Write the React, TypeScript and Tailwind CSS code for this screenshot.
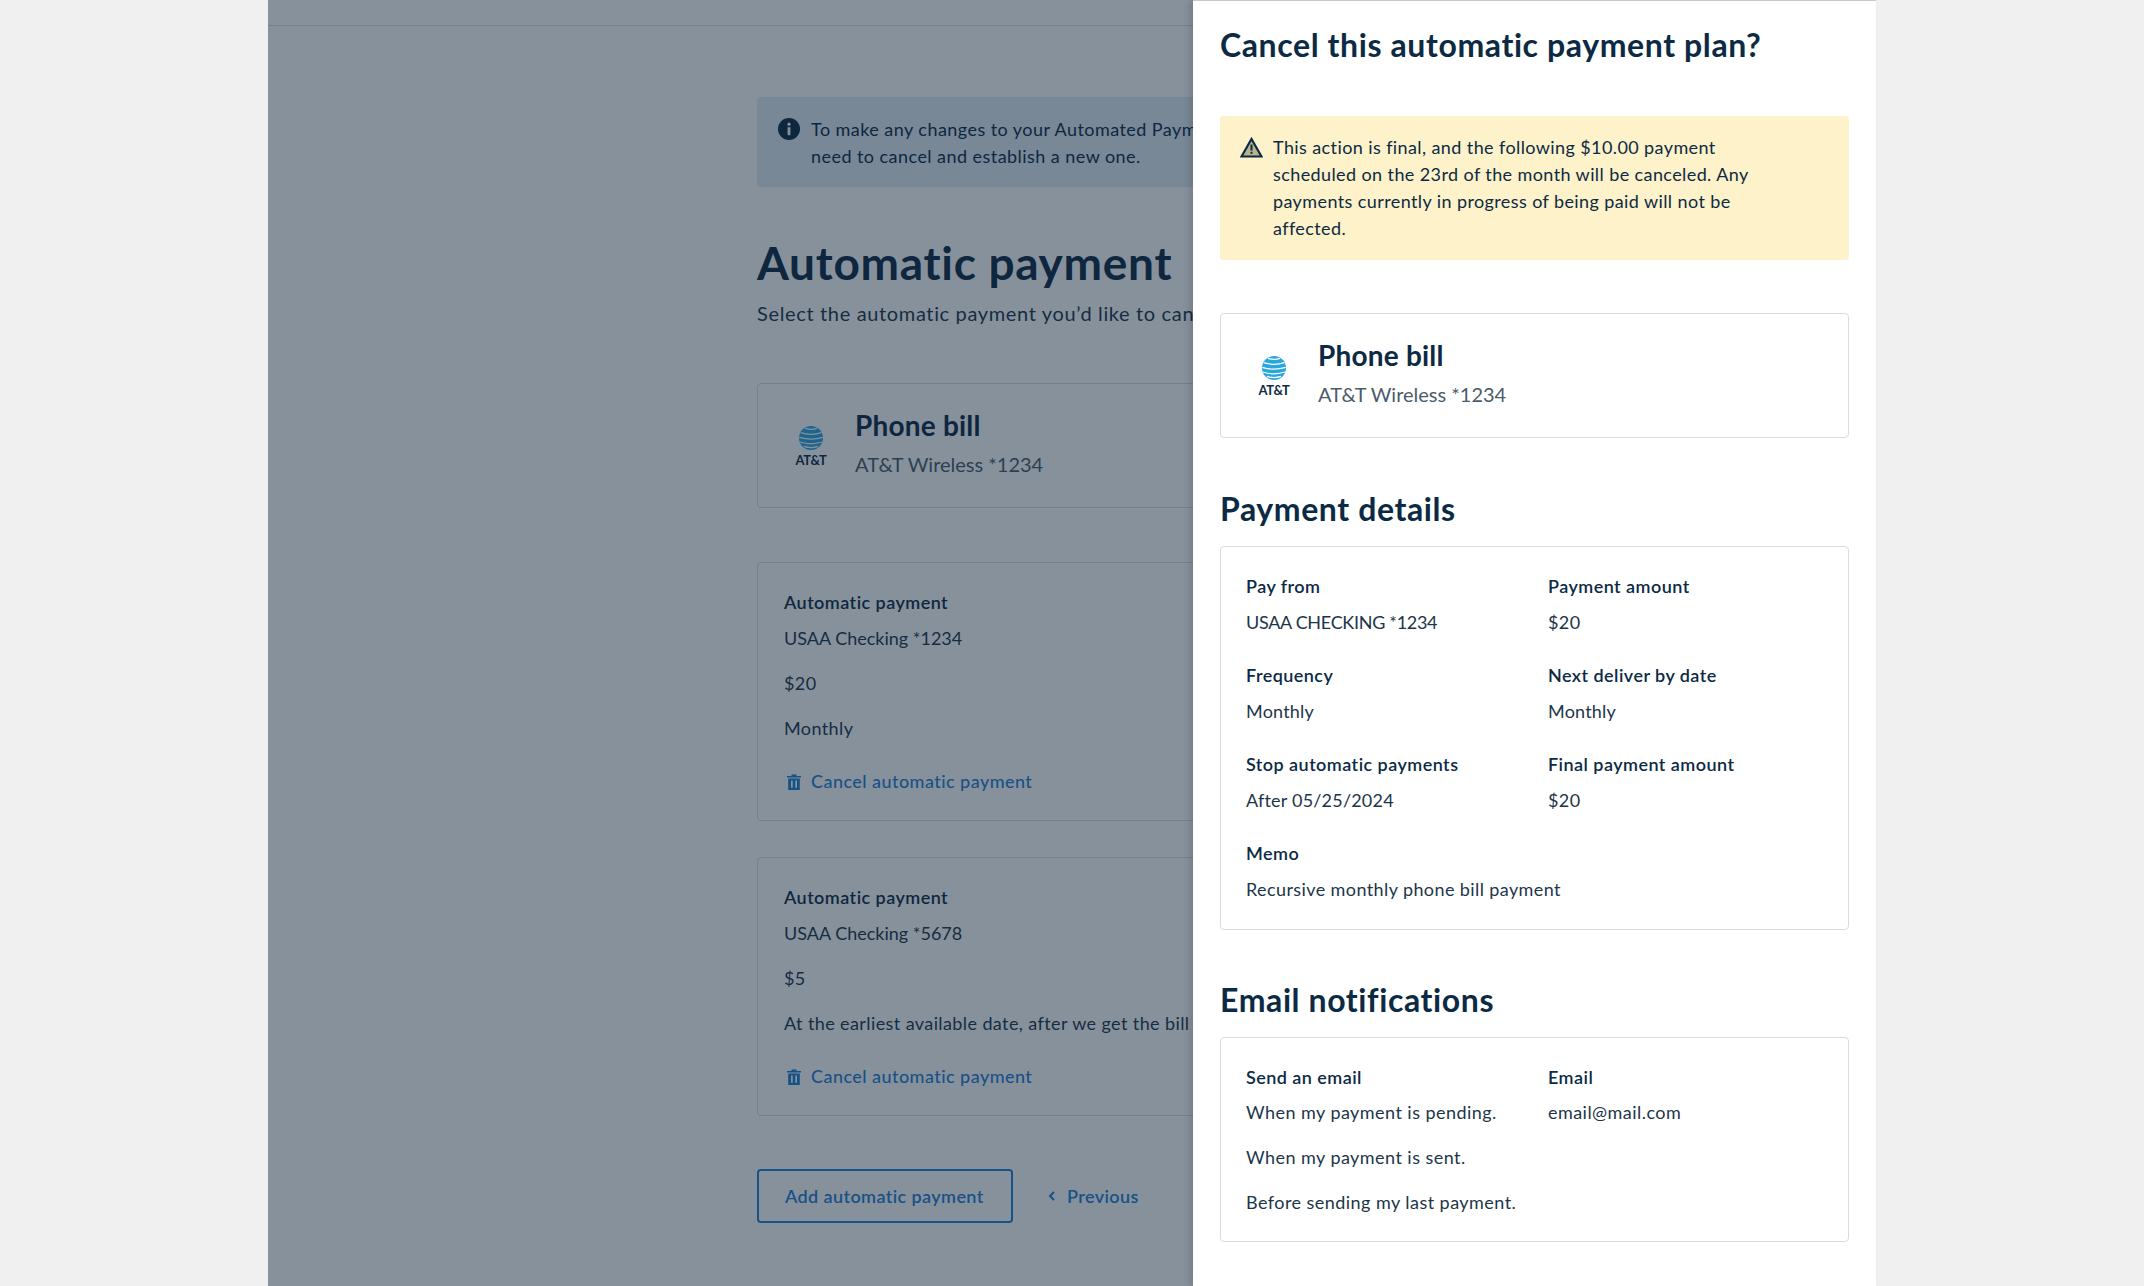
import React from 'react';

const font = { fontFamily: '"Lato", "Noto Sans", sans-serif' };

const AttLogo: React.FC<{ color: string; line: string }> = ({ color, line }) => (
  <div className="flex flex-col items-center w-[34px] pt-[1px]">
    <svg width="24" height="24" viewBox="0 0 24 24">
      <circle cx="12" cy="12" r="12" fill={color} />
      <path d="M6 2.4 Q12 4.4 18 2.4 M1.6 6.6 Q12 10 22.4 6.6 M0.2 11.4 Q12 15 23.8 11.4 M1 16 Q12 19.6 23 16 M5 20.4 Q12 22.8 19 20.4" stroke={line} strokeWidth="1.2" fill="none" />
    </svg>
    <span className="text-[13px] leading-[14px] font-bold mt-[3px] tracking-[-0.3px] text-[#0c2a44]">AT&amp;T</span>
  </div>
);

const TrashIcon = () => (
  <svg width="14" height="16" viewBox="0 0 14 16" fill="currentColor" className="shrink-0">
    <path d="M0 2h4.5V0.5h5V2H14v1.6H0z" />
    <path fillRule="evenodd" d="M1.2 4.4h11.6V16H1.2zM4 6.5v7.2h1.7V6.5zM8.3 6.5v7.2H10V6.5z" />
  </svg>
);

const PhoneCard: React.FC = () => (
  <div className="flex items-center h-[125px] border border-[#d9dcdf] rounded pl-[36px] bg-white">
    <AttLogo color="#2aa6df" line="#fff" />
    <div className="ml-[27px] mb-[8px]">
      <div className="text-[28px] leading-[40px] font-bold text-[#0c2a44] tracking-[0.2px]">Phone bill</div>
      <div className="text-[20px] leading-[30px] mt-[4px] text-[#4b5c6b]">AT&amp;T Wireless *1234</div>
    </div>
  </div>
);

const PlanCard: React.FC<{ account: string; amount: string; when: string }> = ({ account, amount, when }) => (
  <div className="border border-[#d9dcdf] rounded px-[26px] pt-[26px] h-[259px] w-[700px]">
    <div className="text-[18px] leading-[27px] font-semibold text-[#0c2a44] mb-[9px] tracking-[0.45px]">Automatic payment</div>
    <div className="text-[18px] leading-[27px] mb-[18px]">{account}</div>
    <div className="text-[18px] leading-[27px] mb-[18px] tracking-[0.4px]">{amount}</div>
    <div className="text-[18px] leading-[27px] mb-[26px] tracking-[0.4px] whitespace-nowrap">{when}</div>
    <a className="flex items-center gap-[10px] pl-[3px] text-[18px] leading-[27px] font-medium text-[#1f80d2] tracking-[0.45px]">
      <TrashIcon />
      Cancel automatic payment
    </a>
  </div>
);

const Field: React.FC<{ label: string; value: string; className?: string; valueClass?: string }> = ({
  label,
  value,
  className = '',
  valueClass = 'tracking-[0.4px]',
}) => (
  <div className={className}>
    <div className="text-[18px] leading-[27px] font-semibold text-[#0c2a44] mb-[9px] tracking-[0.45px]">{label}</div>
    <div className={`text-[18px] leading-[27px] ${valueClass}`}>{value}</div>
  </div>
);

const App: React.FC = () => {
  return (
    <div className="flex justify-center h-screen overflow-hidden bg-[#f0f0f0] text-[#1d3549]" style={font}>
      <div className="flex w-[1608px] h-full">
        {/* page behind the drawer */}
        <main className="relative w-[925px] h-full overflow-hidden bg-white">
          <div className="h-[26px] border-b border-[#d9dcdf]" />
          <div className="ml-[489px] w-[700px] pt-[71px]">
            <div className="flex h-[90px] rounded bg-[#e0ecf5] pl-[21px] pt-[19px] text-[18px] leading-[27px] tracking-[0.45px] text-[#0c2a44]">
              <svg width="22" height="22" viewBox="0 0 22 22" className="shrink-0 mt-[2px]">
                <circle cx="11" cy="11" r="11" fill="#0c2a44" />
                <circle cx="11" cy="6.2" r="1.6" fill="#fff" />
                <rect x="9.6" y="9.2" width="2.8" height="8" fill="#fff" />
              </svg>
              <div className="ml-[11px] whitespace-nowrap">
                To make any changes to your Automated Payment plan, you will
                <br />
                need to cancel and establish a new one.
              </div>
            </div>
            <h1 className="text-[46px] leading-[56px] font-bold text-[#0c2a44] mt-[48px] tracking-[0.7px]">Automatic payment</h1>
            <p className="text-[20px] leading-[30px] mt-[7px] tracking-[0.65px] whitespace-nowrap">Select the automatic payment you’d like to cancel.</p>
            <div className="mt-[55px]">
              <PhoneCard />
            </div>
            <div className="mt-[54px]">
              <PlanCard account="USAA Checking *1234" amount="$20" when="Monthly" />
            </div>
            <div className="mt-[36px]">
              <PlanCard account="USAA Checking *5678" amount="$5" when="At the earliest available date, after we get the bill" />
            </div>
            <div className="flex items-center mt-[53px] text-[#1f80d2]">
              <button className="w-[256px] h-[54px] border-2 border-[#1f80d2] rounded text-left pl-[26px] text-[18px] font-semibold tracking-[0.4px]">Add automatic payment</button>
              <span className="flex items-center ml-[34px] text-[18px] font-semibold tracking-[0.4px]">
                <svg width="10" height="12" viewBox="0 0 10 12" fill="none" stroke="currentColor" strokeWidth="2" className="mr-[10px]"><path d="M7 2 L3 6 L7 10" /></svg>
                Previous
              </span>
            </div>
          </div>
          <div className="absolute inset-0 bg-[#0f2339]/50" />
        </main>

        {/* cancel drawer */}
        <aside className="relative w-[683px] h-full bg-white border-t border-[#c4c9ce] pl-[27px] pr-[27px] shadow-[-4px_0_6px_rgba(0,0,0,0.12)]">
          <h2 className="text-[32px] leading-[44px] font-bold text-[#0c2a44] mt-[22px] tracking-[0.6px]">Cancel this automatic payment plan?</h2>
          <div className="flex mt-[49px] h-[144px] rounded bg-[#fdf2c9] pl-[20px] pt-[18px]">
            <svg width="23" height="21" viewBox="0 0 23 21" className="shrink-0 mt-[3px]">
              <path d="M11.5 2 L21.5 19.5 H1.5 Z" fill="#b8b38f" stroke="#0c2a44" strokeWidth="2.2" strokeLinejoin="miter" />
              <rect x="10.5" y="7.5" width="2" height="6" fill="#0c2a44" />
              <rect x="10.5" y="14.8" width="2" height="2" fill="#0c2a44" />
            </svg>
            <p className="ml-[10px] w-[480px] text-[18px] leading-[27px] tracking-[0.4px] text-[#0c2a44]">
              This action is final, and the following $10.00 payment scheduled on the 23rd of the month will be canceled. Any payments currently in progress of being paid will not be affected.
            </p>
          </div>
          <div className="mt-[53px]">
            <PhoneCard />
          </div>
          <h2 className="text-[32px] leading-[40px] font-bold text-[#0c2a44] mt-[51px] tracking-[0.6px]">Payment details</h2>
          <div className="border border-[#d9dcdf] rounded mt-[17px] h-[384px] pl-[25px] pr-[26px] pt-[26px]">
            <div className="grid grid-cols-[302px_1fr] gap-y-[26px]">
              <Field label="Pay from" value="USAA CHECKING *1234" valueClass="tracking-[-0.3px]" />
              <Field label="Payment amount" value="$20" />
              <Field label="Frequency" value="Monthly" valueClass="tracking-[0.2px]" />
              <Field label="Next deliver by date" value="Monthly" valueClass="tracking-[0.2px]" />
              <Field label="Stop automatic payments" value="After 05/25/2024" valueClass="tracking-[0.2px]" />
              <Field label="Final payment amount" value="$20" />
              <Field label="Memo" value="Recursive monthly phone bill payment" className="col-span-2" />
            </div>
          </div>
          <h2 className="text-[32px] leading-[40px] font-bold text-[#0c2a44] mt-[50px] tracking-[0.6px]">Email notifications</h2>
          <div className="border border-[#d9dcdf] rounded mt-[17px] h-[205px] pl-[25px] pr-[26px] pt-[26px]">
            <div className="grid grid-cols-[302px_1fr]">
              <div>
                <div className="text-[18px] leading-[27px] font-semibold text-[#0c2a44] mb-[8px] tracking-[0.45px]">Send an email</div>
                <div className="text-[18px] leading-[27px] mb-[18px] tracking-[0.45px]">When my payment is pending.</div>
                <div className="text-[18px] leading-[27px] mb-[18px] tracking-[0.45px]">When my payment is sent.</div>
                <div className="text-[18px] leading-[27px] tracking-[0.45px]">Before sending my last payment.</div>
              </div>
              <div>
                <div className="text-[18px] leading-[27px] font-semibold text-[#0c2a44] mb-[8px] tracking-[0.45px]">Email</div>
                <div className="text-[18px] leading-[27px] tracking-[0.45px]">email@mail.com</div>
              </div>
            </div>
          </div>
        </aside>
      </div>
    </div>
  );
};

export default App;
